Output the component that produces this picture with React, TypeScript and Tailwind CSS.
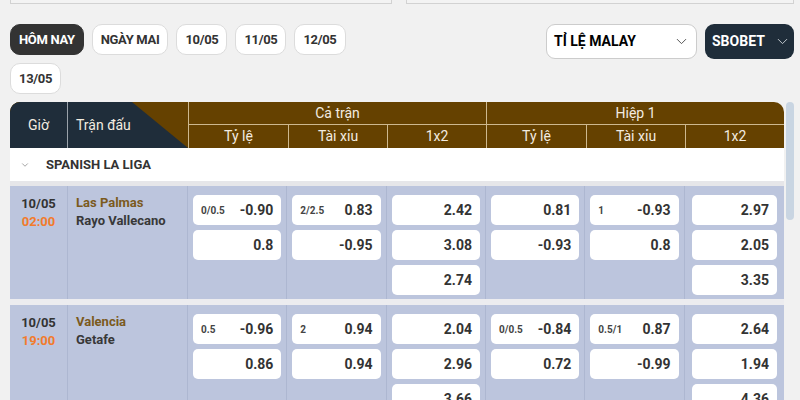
import { ChevronDown } from "lucide-react";

type Odd = { label?: string; value: string };

type Match = {
  date: string;
  time: string;
  home: string;
  away: string;
  cols: Odd[][];
};

const matches: Match[] = [
  {
    date: "10/05",
    time: "02:00",
    home: "Las Palmas",
    away: "Rayo Vallecano",
    cols: [
      [{ label: "0/0.5", value: "-0.90" }, { value: "0.8" }],
      [{ label: "2/2.5", value: "0.83" }, { value: "-0.95" }],
      [{ value: "2.42" }, { value: "3.08" }, { value: "2.74" }],
      [{ value: "0.81" }, { value: "-0.93" }],
      [{ label: "1", value: "-0.93" }, { value: "0.8" }],
      [{ value: "2.97" }, { value: "2.05" }, { value: "3.35" }],
    ],
  },
  {
    date: "10/05",
    time: "19:00",
    home: "Valencia",
    away: "Getafe",
    cols: [
      [{ label: "0.5", value: "-0.96" }, { value: "0.86" }],
      [{ label: "2", value: "0.94" }, { value: "0.94" }],
      [{ value: "2.04" }, { value: "2.96" }, { value: "3.66" }],
      [{ label: "0/0.5", value: "-0.84" }, { value: "0.72" }],
      [{ label: "0.5/1", value: "0.87" }, { value: "-0.99" }],
      [{ value: "2.64" }, { value: "1.94" }, { value: "4.36" }],
    ],
  },
];

const days = ["HÔM NAY", "NGÀY MAI", "10/05", "11/05", "12/05", "13/05"];

const gridCols = "grid grid-cols-[58px_120px_repeat(6,minmax(0,1fr))]";

function Chip({ label, active }: { label: string; active?: boolean }) {
  const style = active
    ? "bg-[#333333] text-white border-[#333333]"
    : "bg-white text-[#333333] border-[#dcdcdc]";
  return (
    <button
      className={`h-[31px] px-[8px] rounded-[10px] border text-[13px] font-bold tracking-tight ${style}`}
    >
      {label}
    </button>
  );
}

function OddBox({ odd }: { odd: Odd }) {
  return (
    <div className="h-[30px] bg-white rounded-[5px] flex items-center justify-between px-[8px]">
      <span className="text-[10px] font-bold text-[#444444]">{odd.label ?? ""}</span>
      <span className="text-[14px] font-bold text-[#333333]">{odd.value}</span>
    </div>
  );
}

function MatchRow({ m }: { m: Match }) {
  return (
    <div className={`${gridCols} bg-[#bcc5dd] h-[113px]`}>
      <div className="border-r border-[#adb7d1] flex flex-col items-center pt-[9px] text-[13px] font-bold leading-[18px]">
        <span className="text-[#333333]">{m.date}</span>
        <span className="text-[#f27b2c]">{m.time}</span>
      </div>
      <div className="border-r border-[#adb7d1] flex flex-col pl-[8px] pt-[8px] text-[13px] font-bold leading-[18px]">
        <span className="text-[#7b5a1d]">{m.home}</span>
        <span className="text-[#383838]">{m.away}</span>
      </div>
      {m.cols.map((col, i) => (
        <div
          key={i}
          className="border-r border-[#adb7d1] last:border-r-0 last:px-[7px] flex flex-col gap-[5px] px-[5px] pt-[9px]"
        >
          {col.map((o, j) => (
            <OddBox key={j} odd={o} />
          ))}
        </div>
      ))}
    </div>
  );
}

function HeaderGroup({ title }: { title: string }) {
  return (
    <div className="col-span-3 flex flex-col border-l border-[#cdb88f] first:border-l-0">
      <div className="h-[23px] flex items-center justify-center border-b border-[#cdb88f]">
        {title}
      </div>
      <div className="h-[23px] grid grid-cols-3">
        <div className="flex items-center justify-center">Tỷ lệ</div>
        <div className="flex items-center justify-center border-l border-[#cdb88f]">Tài xỉu</div>
        <div className="flex items-center justify-center border-l border-[#cdb88f]">1x2</div>
      </div>
    </div>
  );
}

export default function App() {
  return (
    <div className="min-h-screen bg-[#f1f1f1] font-['Roboto',sans-serif] pl-[10px] pr-[6px] overflow-hidden">
      <div className="flex gap-[14px]">
        <div className="w-[382px] h-[4px] border-x border-b border-[#d2d2d2] bg-[#f3f3f3]" />
        <div className="flex-1 h-[4px] border-x border-b border-[#d2d2d2] bg-[#f3f3f3]" />
      </div>

      <div className="flex justify-between items-start mt-[20px]">
        <div className="w-[370px] flex flex-wrap gap-[8px]">
          {days.map((d, i) => (
            <Chip key={d} label={d} active={i === 0} />
          ))}
        </div>
        <div className="flex gap-[8px]">
          <button className="w-[151px] h-[35px] rounded-[9px] border border-[#cccccc] bg-white flex items-center justify-between pl-[7px] pr-[6px] text-[14px] font-bold text-black">
            TỈ LỆ MALAY
            <ChevronDown size={17} strokeWidth={1.4} className="text-[#555555]" />
          </button>
          <button className="w-[89px] h-[35px] rounded-[9px] bg-[#1f2d3a] flex items-center justify-between pl-[7px] pr-[3px] text-[14px] font-bold text-white">
            SBOBET
            <ChevronDown size={17} strokeWidth={1.4} className="text-[#c0c6cc]" />
          </button>
        </div>
      </div>

      <div className="flex gap-[2px] mt-[8px]">
        <div className="flex-1">
          <div className={`${gridCols} rounded-t-[10px] overflow-hidden bg-[#654100] text-[#f3ece0] text-[14px]`}>
            <div className="col-span-2 h-[46px] bg-[#654100]">
              <div className="h-full flex bg-[#1f2d3a] [clip-path:polygon(0_0,122px_0,100%_100%,0_100%)]">
                <div className="w-[58px] flex items-center justify-center border-r border-[#9aa2aa]">
                  Giờ
                </div>
                <div className="flex items-center pl-[8px]">Trận đấu</div>
              </div>
            </div>
            <HeaderGroup title="Cả trận" />
            <HeaderGroup title="Hiệp 1" />
          </div>

          <div className="h-[33px] bg-white flex items-center pl-[10px] gap-[16px]">
            <ChevronDown size={10} strokeWidth={1.6} className="text-[#777777]" />
            <span className="text-[13px] font-bold text-[#333333]">SPANISH LA LIGA</span>
          </div>
          <div className="h-[5px] bg-[#e6e6e9]" />

          {matches.map((m, i) => (
            <div key={i}>
              <MatchRow m={m} />
              <div className="h-[6px] bg-[#ececef]" />
            </div>
          ))}
        </div>
        <div className="w-[8px]">
          <div className="h-[118px] rounded-full bg-[#c9d5e2]" />
        </div>
      </div>
    </div>
  );
}
